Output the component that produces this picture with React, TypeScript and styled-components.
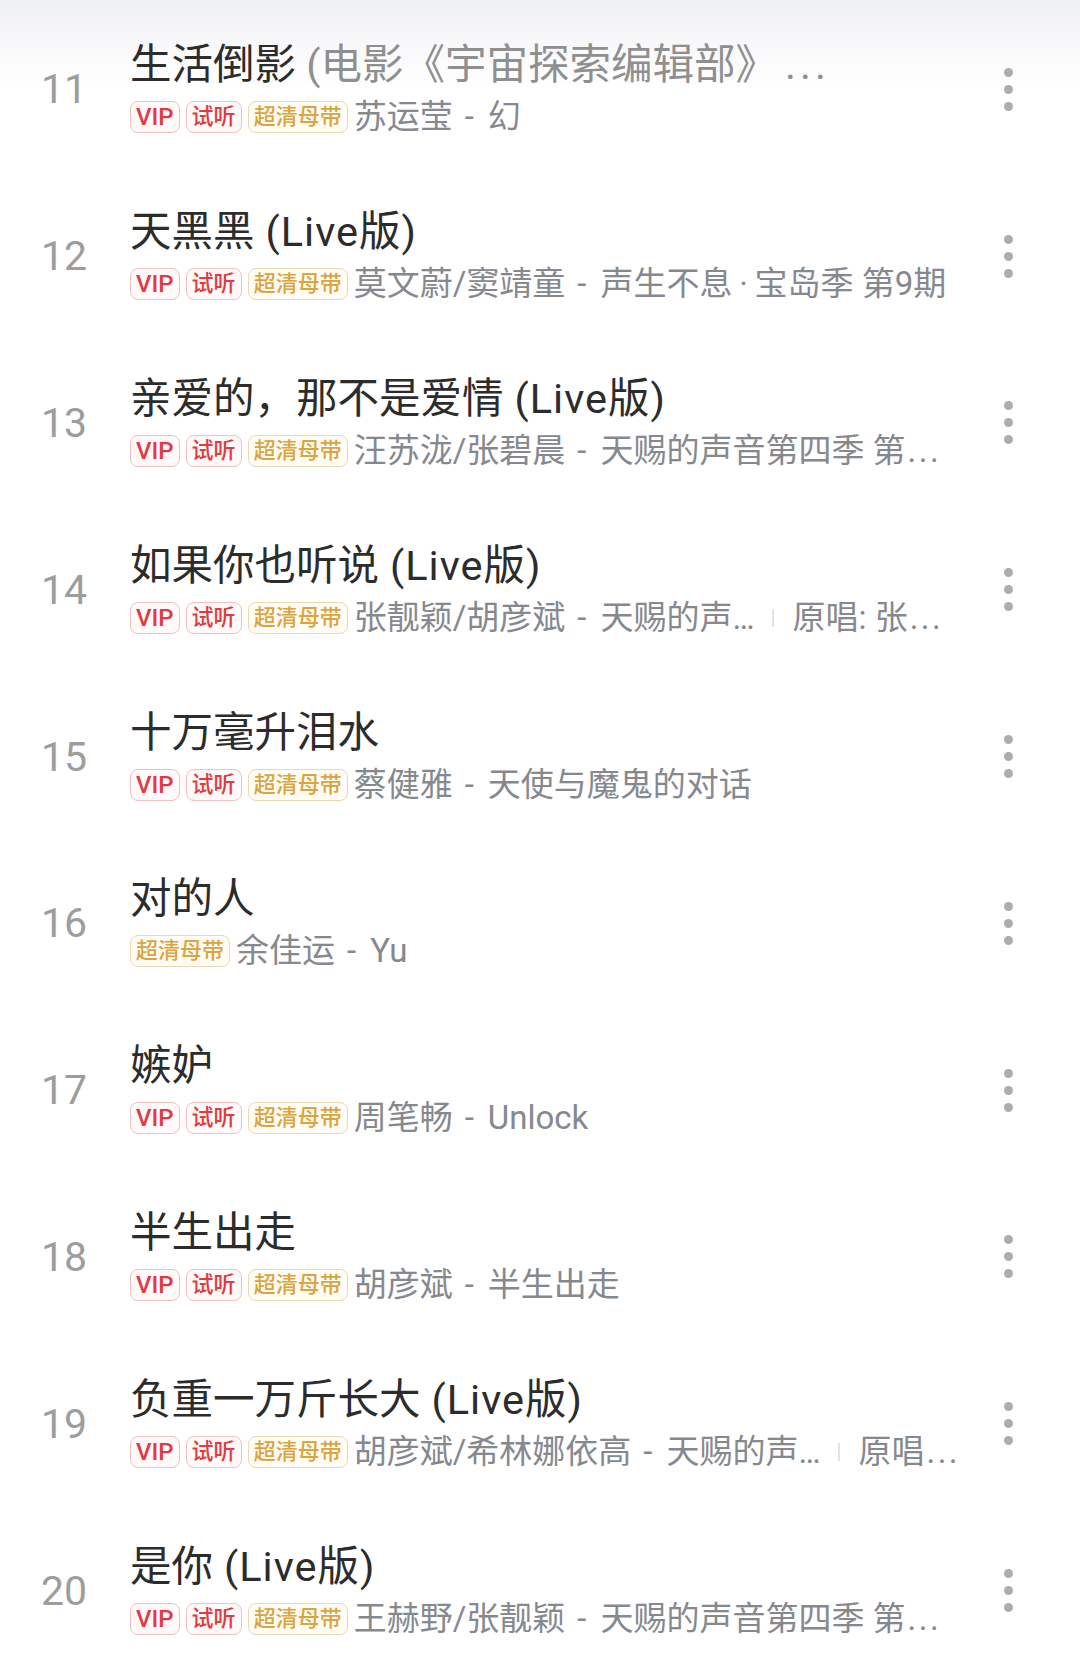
import React from "react";
import styled, { createGlobalStyle } from "styled-components";

const GlobalStyle = createGlobalStyle`
  html, body {
    margin: 0;
    padding: 0;
    background: #ffffff;
  }
  body {
    background: linear-gradient(180deg, #eff0f3 0px, #f8f8fa 40px, #ffffff 90px);
    background-repeat: no-repeat;
    font-family: "Roboto", "Noto Sans CJK SC", sans-serif;
  }
`;

type TagKind = "vip" | "trial" | "hq";

interface Song {
  no: number;
  title: string;
  version?: string;
  muted?: string;
  tags: TagKind[];
  artist: string;
  album: string;
  albumCut?: "tight" | "loose";
  origin?: string;
}

const ALL: TagKind[] = ["vip", "trial", "hq"];

const songs: Song[] = [
  { no: 11, title: "生活倒影 ", muted: "(电影《宇宙探索编辑部》", tags: ALL, artist: "苏运莹", album: "幻" },
  { no: 12, title: "天黑黑", version: "(Live版)", tags: ALL, artist: "莫文蔚/窦靖童", album: "声生不息\u2009·\u2009宝岛季 第9期" },
  { no: 13, title: "亲爱的，那不是爱情", version: "(Live版)", tags: ALL, artist: "汪苏泷/张碧晨", album: "天赐的声音第四季 第", albumCut: "loose" },
  { no: 14, title: "如果你也听说", version: "(Live版)", tags: ALL, artist: "张靓颖/胡彦斌", album: "天赐的声", albumCut: "tight", origin: "原唱: 张" },
  { no: 15, title: "十万毫升泪水", tags: ALL, artist: "蔡健雅", album: "天使与魔鬼的对话" },
  { no: 16, title: "对的人", tags: ["hq"], artist: "余佳运", album: "Yu" },
  { no: 17, title: "嫉妒", tags: ALL, artist: "周笔畅", album: "Unlock" },
  { no: 18, title: "半生出走", tags: ALL, artist: "胡彦斌", album: "半生出走" },
  { no: 19, title: "负重一万斤长大", version: "(Live版)", tags: ALL, artist: "胡彦斌/希林娜依高", album: "天赐的声", albumCut: "tight", origin: "原唱" },
  { no: 20, title: "是你", version: "(Live版)", tags: ALL, artist: "王赫野/张靓颖", album: "天赐的声音第四季 第", albumCut: "loose" },
];

const tagLabel: Record<TagKind, string> = {
  vip: "VIP",
  trial: "试听",
  hq: "超清母带",
};

const List = styled.div`
  display: flex;
  flex-direction: column;
  padding-top: 6px;
`;

const Row = styled.div`
  display: flex;
  align-items: center;
  height: 166.8px;
`;

const Index = styled.div`
  flex: none;
  width: 128px;
  text-align: center;
  font-family: "Roboto", sans-serif;
  font-size: 41px;
  font-weight: 400;
  color: #9d9d9d;
  line-height: 48px;
`;

const Body = styled.div`
  flex: 1;
  min-width: 0;
  margin-left: 2px;
  margin-right: 12px;
  display: flex;
  flex-direction: column;
  gap: 8px;
`;

const Title = styled.div`
  font-family: "Roboto", "Noto Sans CJK SC", sans-serif;
  font-size: 41.5px;
  line-height: 48px;
  color: #2c2c2c;
  white-space: nowrap;
  overflow: hidden;
`;

const Version = styled.span`
  margin-left: 11px;
  letter-spacing: 1px;
`;

const Muted = styled.span`
  color: #8f8f8f;
`;

const TitleDots = styled.span`
  color: #8f8f8f;
  letter-spacing: 4px;
  margin-left: 8px;
`;

const Meta = styled.div`
  display: flex;
  align-items: center;
  height: 40px;
  gap: 6px;
  white-space: nowrap;
  overflow: hidden;
`;

const Tag = styled.span<{ $kind: TagKind }>`
  flex: none;
  box-sizing: border-box;
  display: inline-flex;
  align-items: center;
  height: 32px;
  padding: 0 5px;
  border-radius: 8px;
  border: 1.5px solid ${(p) => (p.$kind === "hq" ? "#ecd8b0" : "#f3c0c2")};
  background: ${(p) => (p.$kind === "hq" ? "#fffcf5" : "#fff9f9")};
  color: ${(p) => (p.$kind === "hq" ? "#dba43c" : "#e23a40")};
  font-family: "Roboto", "Noto Sans CJK SC", sans-serif;
  font-size: ${(p) => (p.$kind === "vip" ? "24px" : "22px")};
  font-weight: 500;
  line-height: 1;
`;

const SubText = styled.span`
  flex: none;
  font-family: "Roboto", "Noto Sans CJK SC", sans-serif;
  font-size: 33px;
  line-height: 40px;
  color: #85898f;
`;

const Dash = styled.span`
  display: inline-block;
  margin: 0 14px 0 12px;
`;

const Cut = styled.span<{ $loose?: boolean }>`
  letter-spacing: ${(p) => (p.$loose ? "2.5px" : "0")};
  margin-left: ${(p) => (p.$loose ? "2px" : "0")};
`;

const Divider = styled.span`
  flex: none;
  width: 2px;
  height: 18px;
  background: #e3e3e5;
  margin: 0 12px;
`;

const More = styled.div`
  flex: none;
  width: 60px;
  margin-right: 42px;
  display: flex;
  flex-direction: column;
  align-items: center;
  gap: 8px;
`;

const Dot = styled.span`
  width: 9px;
  height: 9px;
  border-radius: 50%;
  background: #adadad;
`;

export default function App() {
  return (
    <>
      <GlobalStyle />
      <List>
        {songs.map((s) => (
          <Row key={s.no}>
            <Index>{s.no}</Index>
            <Body>
              <Title>
                {s.title}
                {s.version && <Version>{s.version}</Version>}
                {s.muted && (
                  <>
                    <Muted>{s.muted}</Muted>
                    <TitleDots>...</TitleDots>
                  </>
                )}
              </Title>
              <Meta>
                {s.tags.map((t) => (
                  <Tag key={t} $kind={t}>
                    {tagLabel[t]}
                  </Tag>
                ))}
                <SubText>
                  {s.artist}
                  <Dash>-</Dash>
                  {s.album}
                  {s.albumCut === "loose" && <Cut $loose>...</Cut>}
                  {s.albumCut === "tight" && <Cut>…</Cut>}
                </SubText>
                {s.origin && (
                  <>
                    <Divider />
                    <SubText>
                      {s.origin}
                      <Cut $loose>...</Cut>
                    </SubText>
                  </>
                )}
              </Meta>
            </Body>
            <More>
              <Dot />
              <Dot />
              <Dot />
            </More>
          </Row>
        ))}
      </List>
    </>
  );
}
